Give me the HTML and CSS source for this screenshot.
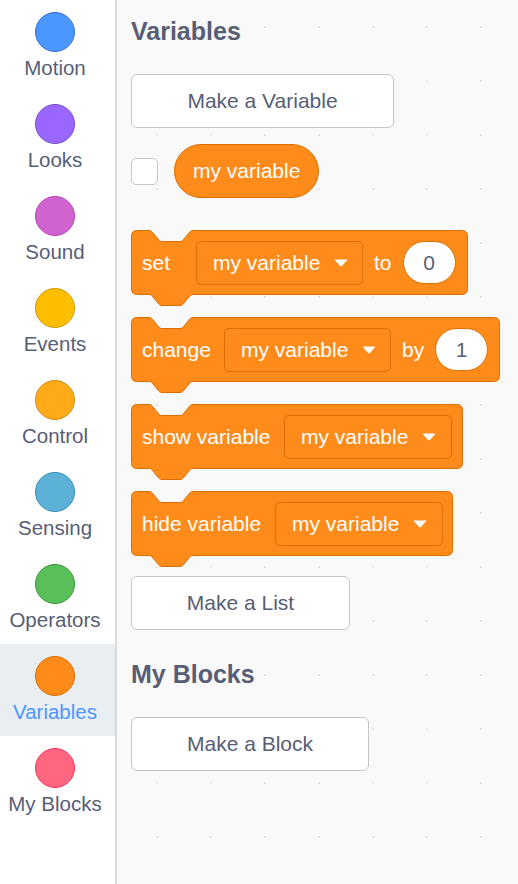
FILE: index.html
```html
<!DOCTYPE html>
<html lang="en">
<head>
<meta charset="utf-8">
<title>Variables palette</title>
<link rel="stylesheet" href="styles.css">
</head>
<body>
<div class="app">
  <nav class="sidebar">
    <div class="cat"><span class="dot motion"></span><span class="label">Motion</span></div>
    <div class="cat"><span class="dot looks"></span><span class="label">Looks</span></div>
    <div class="cat"><span class="dot sound"></span><span class="label">Sound</span></div>
    <div class="cat"><span class="dot events"></span><span class="label">Events</span></div>
    <div class="cat"><span class="dot control"></span><span class="label">Control</span></div>
    <div class="cat"><span class="dot sensing"></span><span class="label">Sensing</span></div>
    <div class="cat"><span class="dot operators"></span><span class="label">Operators</span></div>
    <div class="cat selected"><span class="dot variables"></span><span class="label">Variables</span></div>
    <div class="cat"><span class="dot myblocks"></span><span class="label">My Blocks</span></div>
  </nav>
  <main class="palette">
    <h2 class="heading">Variables</h2>
    <div class="btn btn-var">Make a Variable</div>
    <div class="var-row">
      <span class="checkbox"></span>
      <span class="reporter">my variable</span>
    </div>
    <div class="blocks">
      <div class="block b-set">
        <svg class="shape" width="337" height="77" viewBox="0 0 337 77"><path d="M0.5,5.5 A5,5 0 0 1 5.5,0.5 H18 c2,0 3,1 4,2.5 l5,6 c1,1.5 2,2.5 4,2.5 h18 c2,0 3,-1 4,-2.5 l5,-6 c1,-1.5 2,-2.5 4,-2.5 H331.5 A5,5 0 0 1 336.5,5.5 V59.5 A5,5 0 0 1 331.5,64.5 H62 c-2,0 -3,1 -4,2.5 l-5,6 c-1,1.5 -2,2.5 -4,2.5 h-18 c-2,0 -3,-1 -4,-2.5 l-5,-6 c-1,-1.5 -2,-2.5 -4,-2.5 H5.5 A5,5 0 0 1 0.5,59.5 Z"/></svg>
        <span class="lbl lbl-set">set</span>
        <span class="dd">my variable <svg class="arrow" width="14" height="8" viewBox="0 0 14 8"><path d="M1.6 0.5 H12.4 Q13.6 0.5 12.8 1.5 L7.9 7 Q7 7.9 6.1 7 L1.2 1.5 Q0.4 0.5 1.6 0.5 Z"/></svg></span>
        <span class="lbl">to</span>
        <span class="num">0</span>
      </div>
      <div class="block b-change">
        <svg class="shape" width="369" height="77" viewBox="0 0 369 77"><path d="M0.5,5.5 A5,5 0 0 1 5.5,0.5 H18 c2,0 3,1 4,2.5 l5,6 c1,1.5 2,2.5 4,2.5 h18 c2,0 3,-1 4,-2.5 l5,-6 c1,-1.5 2,-2.5 4,-2.5 H363.5 A5,5 0 0 1 368.5,5.5 V59.5 A5,5 0 0 1 363.5,64.5 H62 c-2,0 -3,1 -4,2.5 l-5,6 c-1,1.5 -2,2.5 -4,2.5 h-18 c-2,0 -3,-1 -4,-2.5 l-5,-6 c-1,-1.5 -2,-2.5 -4,-2.5 H5.5 A5,5 0 0 1 0.5,59.5 Z"/></svg>
        <span class="lbl lbl-change">change</span>
        <span class="dd">my variable <svg class="arrow" width="14" height="8" viewBox="0 0 14 8"><path d="M1.6 0.5 H12.4 Q13.6 0.5 12.8 1.5 L7.9 7 Q7 7.9 6.1 7 L1.2 1.5 Q0.4 0.5 1.6 0.5 Z"/></svg></span>
        <span class="lbl">by</span>
        <span class="num">1</span>
      </div>
      <div class="block b-show">
        <svg class="shape" width="332" height="77" viewBox="0 0 332 77"><path d="M0.5,5.5 A5,5 0 0 1 5.5,0.5 H18 c2,0 3,1 4,2.5 l5,6 c1,1.5 2,2.5 4,2.5 h18 c2,0 3,-1 4,-2.5 l5,-6 c1,-1.5 2,-2.5 4,-2.5 H326.5 A5,5 0 0 1 331.5,5.5 V59.5 A5,5 0 0 1 326.5,64.5 H62 c-2,0 -3,1 -4,2.5 l-5,6 c-1,1.5 -2,2.5 -4,2.5 h-18 c-2,0 -3,-1 -4,-2.5 l-5,-6 c-1,-1.5 -2,-2.5 -4,-2.5 H5.5 A5,5 0 0 1 0.5,59.5 Z"/></svg>
        <span class="lbl lbl-show">show variable</span>
        <span class="dd">my variable <svg class="arrow" width="14" height="8" viewBox="0 0 14 8"><path d="M1.6 0.5 H12.4 Q13.6 0.5 12.8 1.5 L7.9 7 Q7 7.9 6.1 7 L1.2 1.5 Q0.4 0.5 1.6 0.5 Z"/></svg></span>
      </div>
      <div class="block b-hide">
        <svg class="shape" width="322" height="77" viewBox="0 0 322 77"><path d="M0.5,5.5 A5,5 0 0 1 5.5,0.5 H18 c2,0 3,1 4,2.5 l5,6 c1,1.5 2,2.5 4,2.5 h18 c2,0 3,-1 4,-2.5 l5,-6 c1,-1.5 2,-2.5 4,-2.5 H316.5 A5,5 0 0 1 321.5,5.5 V59.5 A5,5 0 0 1 316.5,64.5 H62 c-2,0 -3,1 -4,2.5 l-5,6 c-1,1.5 -2,2.5 -4,2.5 h-18 c-2,0 -3,-1 -4,-2.5 l-5,-6 c-1,-1.5 -2,-2.5 -4,-2.5 H5.5 A5,5 0 0 1 0.5,59.5 Z"/></svg>
        <span class="lbl lbl-hide">hide variable</span>
        <span class="dd">my variable <svg class="arrow" width="14" height="8" viewBox="0 0 14 8"><path d="M1.6 0.5 H12.4 Q13.6 0.5 12.8 1.5 L7.9 7 Q7 7.9 6.1 7 L1.2 1.5 Q0.4 0.5 1.6 0.5 Z"/></svg></span>
      </div>
    </div>
    <div class="btn btn-list">Make a List</div>
    <h2 class="heading heading-blocks">My Blocks</h2>
    <div class="btn btn-block">Make a Block</div>
  </main>
</div>
</body>
</html>
```

FILE: styles.css
```css
html, body {
  margin: 0;
  padding: 0;
  height: 100%;
  overflow: hidden;
}

body {
  font-family: "Liberation Sans", Arial, Helvetica, sans-serif;
  color: #575e75;
  background: #f9f9f9;
}

.app {
  display: flex;
  height: 884px;
}

/* ---------- sidebar ---------- */
.sidebar {
  width: 115px;
  flex: none;
  background: #ffffff;
  border-right: 2px solid #dadada;
  display: flex;
  flex-direction: column;
}

.cat {
  height: 92px;
  display: flex;
  flex-direction: column;
  align-items: center;
  padding: 12px 5px 0 0;
  box-sizing: border-box;
}

.cat.selected {
  background: #e9eef2;
}

.cat.selected .label {
  color: #4c97ff;
}

.dot {
  width: 38px;
  height: 38px;
  border-radius: 50%;
  border: 1px solid;
  flex: none;
}

.label {
  margin-top: 4px;
  font-size: 20.5px;
  line-height: 24px;
  white-space: nowrap;
  color: #575e75;
}

.motion { background: #4c97ff; border-color: #3373cc; }
.looks { background: #9966ff; border-color: #774dcb; }
.sound { background: #cf63cf; border-color: #bd42bd; }
.events { background: #ffbf00; border-color: #cc9900; }
.control { background: #ffab19; border-color: #cf8b17; }
.sensing { background: #5cb1d6; border-color: #2e8eb8; }
.operators { background: #59c059; border-color: #389438; }
.variables { background: #ff8c1a; border-color: #db6e00; }
.myblocks { background: #ff6680; border-color: #ff3355; }

/* ---------- palette ---------- */
.palette {
  flex: 1;
  display: flex;
  flex-direction: column;
  align-items: flex-start;
  padding: 16px 0 0 14px;
  background-color: #f9f9f9;
  background-image: radial-gradient(circle, #e4e4e4 0, #e4e4e4 1px, rgba(249, 249, 249, 0) 1.6px);
  background-size: 54px 54px;
  background-position: 13px 0;
}

.heading {
  margin: 0;
  font-size: 25px;
  line-height: 30px;
  font-weight: bold;
  color: #575e75;
}

.heading-blocks {
  margin-top: 29px;
}

.btn {
  box-sizing: border-box;
  height: 54px;
  margin-top: 28px;
  border: 1px solid #c6c6c6;
  border-radius: 6px;
  background: #ffffff;
  font-size: 21px;
  display: flex;
  align-items: center;
  justify-content: center;
  color: #575e75;
}

.btn-var { width: 263px; }
.btn-list { width: 219px; margin-top: 20px; }
.btn-block { width: 238px; }

.var-row {
  margin-top: 16px;
  display: flex;
  align-items: center;
  gap: 16px;
}

.checkbox {
  box-sizing: border-box;
  width: 27px;
  height: 27px;
  border: 1px solid #c6c6c6;
  border-radius: 5px;
  background: #ffffff;
}

.reporter {
  box-sizing: border-box;
  height: 54px;
  padding: 0 18px;
  border-radius: 27px;
  background: #ff8c1a;
  border: 1px solid #db6e00;
  color: #ffffff;
  font-size: 21px;
  display: flex;
  align-items: center;
}

/* ---------- blocks ---------- */
.blocks {
  margin-top: 32px;
  display: flex;
  flex-direction: column;
  gap: 22px;
}

.block {
  position: relative;
  height: 65px;
  box-sizing: border-box;
  padding: 0 11px;
  display: flex;
  align-items: center;
  gap: 11px;
  color: #ffffff;
  font-size: 21px;
}

.b-set { width: 337px; }
.b-change { width: 369px; }
.b-show { width: 332px; }
.b-hide { width: 322px; }

.shape {
  position: absolute;
  left: 0;
  top: 0;
  z-index: 0;
}

.shape path {
  fill: #ff8c1a;
  stroke: #db6e00;
  stroke-width: 1;
}

.lbl,
.dd,
.num {
  position: relative;
  z-index: 1;
  white-space: nowrap;
  flex: none;
}

.lbl-set { min-width: 43px; }
.lbl-change { min-width: 71px; }
.lbl-show { min-width: 131px; }
.lbl-hide { min-width: 122px; }

.dd {
  box-sizing: border-box;
  width: 167px;
  height: 44px;
  padding: 0 0 0 16px;
  border: 1px solid #db6e00;
  border-radius: 5px;
  background: #ff8c1a;
  display: flex;
  align-items: center;
  gap: 14px;
}

.b-show .dd,
.b-hide .dd {
  width: 168px;
}

.arrow path {
  fill: #ffffff;
}

.num {
  box-sizing: border-box;
  width: 53px;
  height: 43px;
  border-radius: 22px;
  background: #ffffff;
  border: 1px solid #db6e00;
  color: #575e75;
  display: flex;
  align-items: center;
  justify-content: center;
}
```
